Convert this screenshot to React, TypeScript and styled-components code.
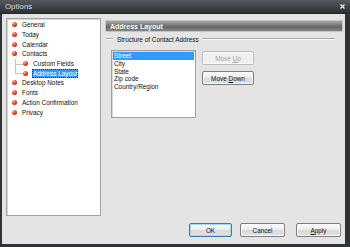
import React from "react";
import styled, { createGlobalStyle, css } from "styled-components";

const GlobalStyle = createGlobalStyle`
  html, body { margin: 0; padding: 0; background: #2f3236; }
  body { font-family: "Liberation Sans", Arial, sans-serif; }
`;

const Window = styled.div`
  width: 350px;
  height: 247px;
  display: flex;
  flex-direction: column;
  overflow: hidden;
`;

const TitleBar = styled.div`
  height: 13px;
  flex: none;
  display: flex;
  align-items: center;
  justify-content: space-between;
  padding: 0 5px 0 5px;
  background: linear-gradient(#55585d, #3c3f44 60%, #2e3034);
  border-bottom: 1px solid #25272a;
`;

const Title = styled.span`
  font-size: 7.8px;
  color: #dedede;
  letter-spacing: 0.05px;
`;

const Frame = styled.div`
  flex: 1;
  display: flex;
  flex-direction: column;
  background: #e4e4e4;
  border: solid #2f3236;
  border-width: 0 5px 3px 2px;
  padding: 4px 2px 0 4px;
  min-height: 0;
`;

const MainRow = styled.div`
  display: flex;
  height: 198px;
`;

const TreePanel = styled.div`
  width: 95px;
  flex: none;
  box-sizing: border-box;
  background: #fff;
  border: 1px solid #a3a3a3;
  box-shadow: inset 1px 1px 0 #d6d6d6;
  padding: 1px 0 0 5px;
`;

const TreeRow = styled.div`
  height: 9.7px;
  display: flex;
  align-items: center;
  font-size: 6.4px;
  color: #111;
  white-space: nowrap;
`;

const Connector = styled.span<{ $last?: boolean }>`
  align-self: stretch;
  width: 8px;
  margin-left: 3px;
  flex: none;
  position: relative;
  border-left: 1px solid #c4c4c4;
  box-sizing: border-box;
  ${(p) =>
    p.$last &&
    css`
      border-left: none;
      &::before {
        content: "";
        position: absolute;
        left: 0;
        top: 0;
        height: 50%;
        border-left: 1px solid #c4c4c4;
      }
    `}
  &::after {
    content: "";
    position: absolute;
    left: 0;
    right: 0;
    top: 50%;
    border-top: 1px solid #c4c4c4;
  }
`;

const Bullet = styled.span`
  width: 5px;
  height: 5px;
  flex: none;
  border-radius: 50%;
  background: radial-gradient(circle at 35% 30%, #ffb39a 0%, #e0452a 45%, #a0200e 100%);
`;

const TreeLabel = styled.span<{ $selected?: boolean }>`
  margin-left: 4px;
  padding: 1px 1px;
  line-height: 7px;
  ${(p) =>
    p.$selected &&
    css`
      background: #3399ff;
      color: #fff;
      outline: 1px dotted #1a3a70;
      outline-offset: -1px;
    `}
`;

const RightPanel = styled.div`
  flex: 1;
  margin-left: 4px;
  padding-top: 2px;
  display: flex;
  flex-direction: column;
`;

const HeaderBar = styled.div`
  height: 12px;
  box-sizing: border-box;
  display: flex;
  align-items: center;
  padding-left: 4px;
  border: 1px solid #c4c4c4;
  border-radius: 1px;
  background: linear-gradient(#a5a5a5, #7c7c7c 40%, #666 60%, #868686);
  font-size: 7px;
  font-weight: bold;
  color: #fafafa;
`;

const GroupLabel = styled.div`
  margin-top: 3px;
  height: 8px;
  display: flex;
  align-items: center;
  font-size: 6.4px;
  color: #111;
`;

const EtchLine = styled.span<{ $grow?: boolean }>`
  height: 0;
  border-top: 1px solid #a8a8a8;
  border-bottom: 1px solid #f8f8f8;
  ${(p) => (p.$grow ? "flex: 1; margin-right: 8px;" : "width: 7px; margin-left: 1px;")}
`;

const GroupText = styled.span`
  margin: 0 4px;
  white-space: nowrap;
`;

const GroupBody = styled.div`
  display: flex;
  margin-top: 7px;
  padding-left: 6px;
`;

const ListBox = styled.div`
  width: 85px;
  height: 68px;
  box-sizing: border-box;
  background: #fff;
  border: 1px solid #a0a0a0;
  box-shadow: inset 1px 1px 0 #d8d8d8;
  padding: 1px;
`;

const ListItem = styled.div<{ $selected?: boolean }>`
  height: 7.8px;
  line-height: 7.8px;
  padding-left: 1px;
  font-size: 6.4px;
  color: #111;
  ${(p) =>
    p.$selected &&
    css`
      background: #3399ff;
      color: #fff;
    `}
`;

const SideButtons = styled.div`
  margin-left: 6px;
  padding-top: 1px;
  display: flex;
  flex-direction: column;
  gap: 6px;
`;

const Button = styled.div<{ $w: number; $default?: boolean; $disabled?: boolean }>`
  width: ${(p) => p.$w}px;
  height: 14px;
  box-sizing: border-box;
  display: flex;
  align-items: center;
  justify-content: center;
  font-size: 6.4px;
  color: #111;
  border: 1px solid #7d7d7d;
  border-radius: 2px;
  background: linear-gradient(#fdfdfd, #ececec 48%, #dadada 52%, #e2e2e2);
  box-shadow: inset 0 0 0 1px #fafafa;
  ${(p) =>
    p.$default &&
    css`
      border-color: #3d7bad;
      box-shadow: inset 0 0 0 1px #a8d8f4;
    `}
  ${(p) =>
    p.$disabled &&
    css`
      color: #a3a3a3;
      border-color: #bcbcbc;
      background: #f0f0f0;
    `}
  u {
    text-decoration-thickness: 0.5px;
    text-underline-offset: 1px;
  }
`;

const Footer = styled.div`
  display: flex;
  justify-content: flex-end;
  padding: 7px 2px 0 0;
  gap: 8px;
`;

const ApplyWrap = styled.div`
  margin-left: 3px;
`;

const tree = [
  { label: "General" },
  { label: "Today" },
  { label: "Calendar" },
  { label: "Contacts" },
  { label: "Custom Fields", child: true },
  { label: "Address Layout", child: true, last: true, selected: true },
  { label: "Desktop Notes" },
  { label: "Fonts" },
  { label: "Action Confirmation" },
  { label: "Privacy" },
];

const fields = ["Street", "City", "State", "Zip code", "Country/Region"];

export default function App() {
  return (
    <>
      <GlobalStyle />
      <Window>
        <TitleBar>
          <Title>Options</Title>
          <svg width="5" height="5" viewBox="0 0 5 5">
            <path d="M0.5 0.5 L4.5 4.5 M4.5 0.5 L0.5 4.5" stroke="#f2f2f2" strokeWidth="1.2" />
          </svg>
        </TitleBar>
        <Frame>
          <MainRow>
            <TreePanel>
              {tree.map((t) => (
                <TreeRow key={t.label}>
                  {t.child && <Connector $last={t.last} />}
                  <Bullet />
                  <TreeLabel $selected={t.selected}>{t.label}</TreeLabel>
                </TreeRow>
              ))}
            </TreePanel>
            <RightPanel>
              <HeaderBar>Address Layout</HeaderBar>
              <GroupLabel>
                <EtchLine />
                <GroupText>Structure of Contact Address</GroupText>
                <EtchLine $grow />
              </GroupLabel>
              <GroupBody>
                <ListBox>
                  {fields.map((f, i) => (
                    <ListItem key={f} $selected={i === 0}>
                      {f}
                    </ListItem>
                  ))}
                </ListBox>
                <SideButtons>
                  <Button $w={52} $disabled>
                    Move&nbsp;<u>U</u>p
                  </Button>
                  <Button $w={52}>
                    Move&nbsp;<u>D</u>own
                  </Button>
                </SideButtons>
              </GroupBody>
            </RightPanel>
          </MainRow>
          <Footer>
            <Button $w={43} $default>
              OK
            </Button>
            <Button $w={45}>Cancel</Button>
            <ApplyWrap>
              <Button $w={45}>
                <u>A</u>pply
              </Button>
            </ApplyWrap>
          </Footer>
        </Frame>
      </Window>
    </>
  );
}
